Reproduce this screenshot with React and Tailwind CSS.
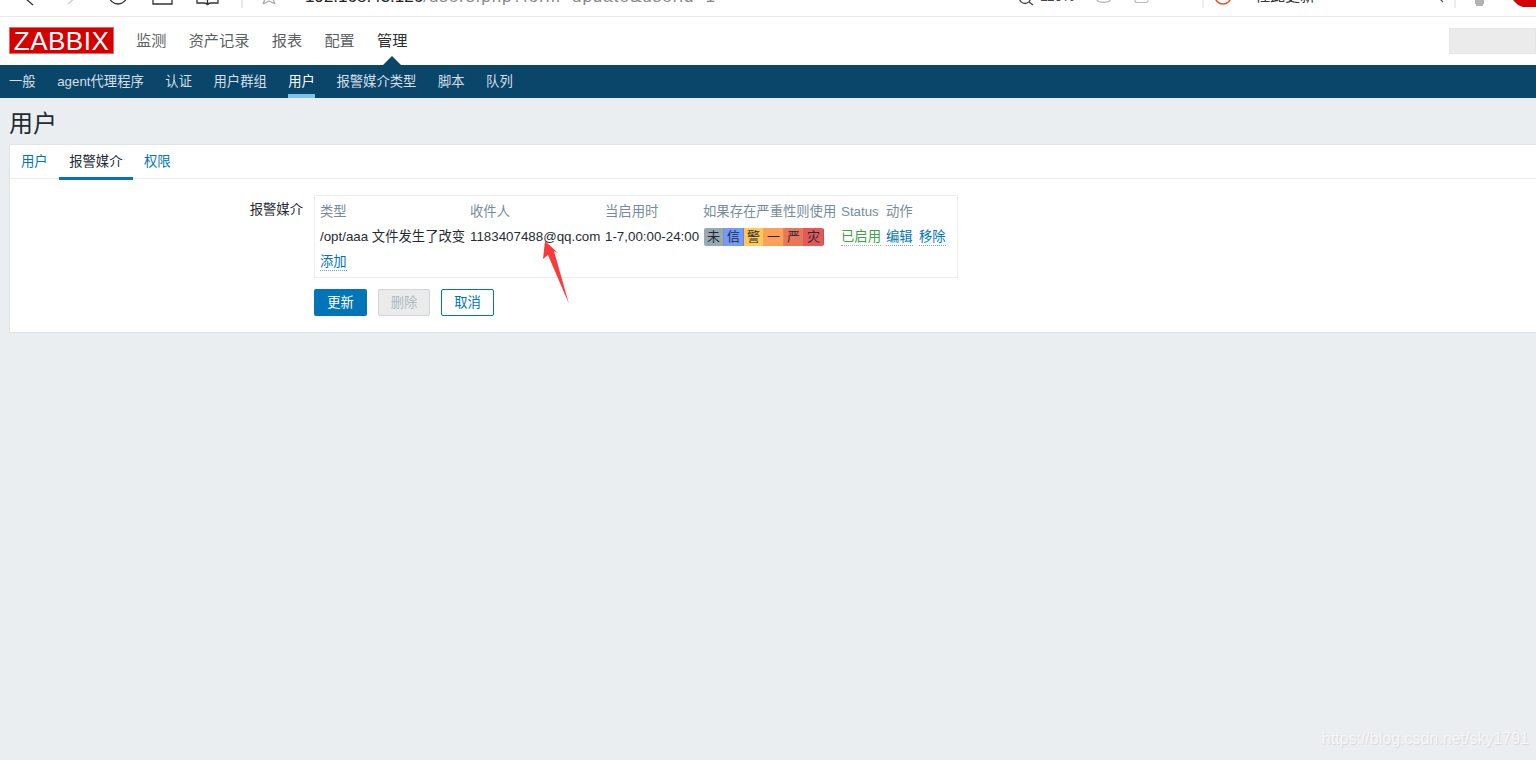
import React from 'react';

const cjk = "font-['Liberation_Sans','Noto_Sans_CJK_SC',sans-serif]";

const menu = ['监测', '资产记录', '报表', '配置', '管理'];
const subMenu = ['一般', 'agent代理程序', '认证', '用户群组', '用户', '报警媒介类型', '脚本', '队列'];
const severities = [
  ['未', 'bg-[#97aab3]'],
  ['信', 'bg-[#7499ff]'],
  ['警', 'bg-[#ffc859]'],
  ['一', 'bg-[#ffa059]'],
  ['严', 'bg-[#e97659]'],
  ['灾', 'bg-[#e45959]'],
];

function BrowserBar() {
  return (
    <div className="h-[17px] bg-white border-b border-[#e8e8e8] overflow-hidden relative">
      <div className="flex items-end h-[16px]">
        <svg width="300" height="16" viewBox="0 0 300 16" className="shrink-0" fill="none" stroke="#333" strokeWidth="1.3">
          <path d="M26 -1L33 5" />
          <path d="M68 4L75 -2" stroke="#ccc" />
          <circle cx="118" cy="-5" r="9" />
          <path d="M153 0V4H172V0" />
          <path d="M197 0V3H204Q207 3 207.500 5Q208 3 211 3H218V0M207.500 0V5" />
          <path d="M242 0V8" stroke="#ddd" />
          <path d="M263 4L265 -1M275 4L273 -1M263 4L269 1L275 4" stroke="#aaa" />
        </svg>
        <div className="text-[17px] leading-[24px] whitespace-nowrap font-['Liberation_Sans',sans-serif] ml-[5px] mb-[7px] text-[#222] shrink-0">
          192.168.43.126<span className="text-[#888] tracking-[1px]">/users.php?form=update&amp;userid=1</span>
        </div>
      </div>
      <div className="absolute right-0 top-0 h-[16px] w-[536px] overflow-hidden">
        <svg width="536" height="16" viewBox="0 0 536 16" fill="none">
          <circle cx="25" cy="-2" r="5.500" stroke="#444" strokeWidth="1.3" />
          <path d="M29 2l4 3" stroke="#444" strokeWidth="1.3" />
          <path d="M97 0c1 3 12 3 13 0" stroke="#bbb" strokeWidth="1.500" />
          <rect x="135" y="-6" width="13" height="8.500" rx="2" stroke="#bbb" strokeWidth="1.200" />
          <path d="M203 0V8" stroke="#ddd" />
          <circle cx="223" cy="-4" r="8" stroke="#e8512e" strokeWidth="1.500" />
          <path d="M216 -1h14" stroke="#e8512e" strokeWidth="1.200" />
          <path d="M440 -1l3 3" stroke="#555" strokeWidth="1.200" />
          <path d="M455 0V8" stroke="#ddd" />
          <path d="M475 1h9M475 3h9M476 5h7" stroke="#666" />
          <path d="M513 0H536V7H523L518 5z" fill="#d40000" />
        </svg>
        <div className="absolute left-[255px] top-[-14px] text-[15px] leading-[18px] text-[#333] whitespace-nowrap font-['Noto_Sans_CJK_SC',sans-serif]">枉此更新</div>
        <div className="absolute left-[40px] top-[-12px] text-[14px] leading-[16px] text-[#444] font-['Liberation_Sans',sans-serif]">110%</div>
      </div>
    </div>
  );
}

function Header() {
  return (
    <div className="h-[48px] bg-white flex items-center justify-between relative">
      <div className="flex items-center">
        <div className="ml-[9px] -mt-[1px] w-[105px] h-[27px] bg-[#d40000] text-white flex items-center justify-center text-[26px] font-['Liberation_Sans',sans-serif] tracking-[0.5px] leading-none border border-[#e66]">ZABBIX</div>
        <ul className={`flex ml-[22px] gap-[22.3px] text-[15.2px] text-[#5a5f62] ${cjk}`}>
          {menu.map(m => (
            <li key={m} className={m === '管理' ? 'text-[#2a2f32]' : ''}>
              {m}
            </li>
          ))}
        </ul>
      </div>
      <div className="w-[87px] h-[26px] bg-[#ebebeb] border border-[#e6e6e6]" />
      <div className="absolute left-[383px] bottom-0 w-0 h-0 border-x-[9px] border-x-transparent border-b-[9px] border-b-[#0a466a]" />
    </div>
  );
}

function SubNav() {
  return (
    <div className={`h-[33px] bg-[#0a466a] flex pl-[9px] gap-[21.5px] text-[13.33px] text-[#d5dfe6] ${cjk}`}>
      {subMenu.map(s => (
        <div key={s} className={`h-[33px] pt-[7px] ${s === '用户' ? 'text-white border-b-[4px] border-[#7dc3ea]' : ''}`}>
          {s}
        </div>
      ))}
    </div>
  );
}

function DottedLink({ children, className = 'text-[#0275b8] border-[#0275b8]/60' }) {
  return <a className={`${className} border-b border-dotted leading-[16px] inline-block`}>{children}</a>;
}

function MediaTable() {
  return (
    <div className="w-[644px] h-[83px] border border-[#ebeef0] pl-[5px] pt-[6px] text-[13.33px] text-[#1f2c33]">
      <div className="flex h-[20px] items-center text-[#768d99]">
        <div className="w-[150px]">类型</div>
        <div className="w-[135px]">收件人</div>
        <div className="w-[98px]">当启用时</div>
        <div className="w-[138px] whitespace-nowrap">如果存在严重性则使用</div>
        <div className="w-[45px]">Status</div>
        <div>动作</div>
      </div>
      <div className="flex h-[30px] items-center whitespace-nowrap">
        <div className="w-[150px]">/opt/aaa 文件发生了改变</div>
        <div className="w-[135px]">1183407488@qq.com</div>
        <div className="w-[99px]">1-7,00:00-24:00</div>
        <div className="w-[137px] flex">
          <div className="flex rounded-[2px] overflow-hidden">
            {severities.map(([t, c]) => (
              <div key={t} className={`w-[20px] h-[18px] leading-[18px] text-center text-[13px] border-r border-[#0000001f] ${c}`}>{t}</div>
            ))}
          </div>
        </div>
        <div className="w-[45px]"><DottedLink className="text-[#429e47] border-[#429e47]/60">已启用</DottedLink></div>
        <div className="w-[33px]"><DottedLink>编辑</DottedLink></div>
        <div><DottedLink>移除</DottedLink></div>
      </div>
      <div className="h-[20px] flex items-center"><DottedLink>添加</DottedLink></div>
    </div>
  );
}

function Card() {
  return (
    <div className="ml-[9px] h-[189px] bg-white border border-[#dfe4e7] border-r-0">
      <div className="h-[34px] flex border-b border-[#ebeef0] pl-[1px] text-[13.33px]">
        <div className="pl-[10px] pr-[11px] pt-[7px] text-[#0275b8]">用户</div>
        <div className="px-[10.5px] pt-[7px] h-[35px] text-[#1f2c33] border-b-[3px] border-[#0275b8]">报警媒介</div>
        <div className="px-[11px] pt-[7px] text-[#0275b8]">权限</div>
      </div>
      <div className="flex pt-[16px]">
        <div className="w-[304px] text-right text-[13.33px] text-[#1f2c33] pt-[5px] pr-[11px]">报警媒介</div>
        <div>
          <MediaTable />
          <div className="flex mt-[11px] text-[13.33px]">
            <button className="w-[53px] h-[27px] bg-[#0275b8] text-white rounded-[2px]">更新</button>
            <button className="ml-[11px] w-[52px] h-[27px] bg-[#ebebeb] text-[#acbbc2] border border-[#cfd5d8] rounded-[2px]">删除</button>
            <button className="ml-[11px] w-[53px] h-[27px] bg-white text-[#0275b8] border border-[#0275b8] rounded-[2px]">取消</button>
          </div>
        </div>
      </div>
    </div>
  );
}

export default function App() {
  return (
    <div className={`w-[1536px] h-[760px] overflow-hidden bg-[#ebeef0] relative ${cjk}`}>
      <BrowserBar />
      <Header />
      <SubNav />
      <h1 className="h-[46px] pl-[9px] pt-[10px] text-[24px] leading-[32px] font-normal text-[#1f2c33]">用户</h1>
      <Card />
      {/* annotation arrow from the screenshot */}
      <svg className="absolute left-[540px] top-[238px]" width="34" height="70" viewBox="0 0 34 70">
        <path d="M5 3L18 15 14 13 29 66 8 17 3 21z" fill="#fb3a3a" />
      </svg>
      <div className="absolute right-[7px] bottom-[9px] text-[16px] text-[#f5f6f7] font-['Liberation_Sans',sans-serif] [text-shadow:1px_1px_1px_#d5d8da]">https://blog.csdn.net/sky1791</div>
    </div>
  );
}
